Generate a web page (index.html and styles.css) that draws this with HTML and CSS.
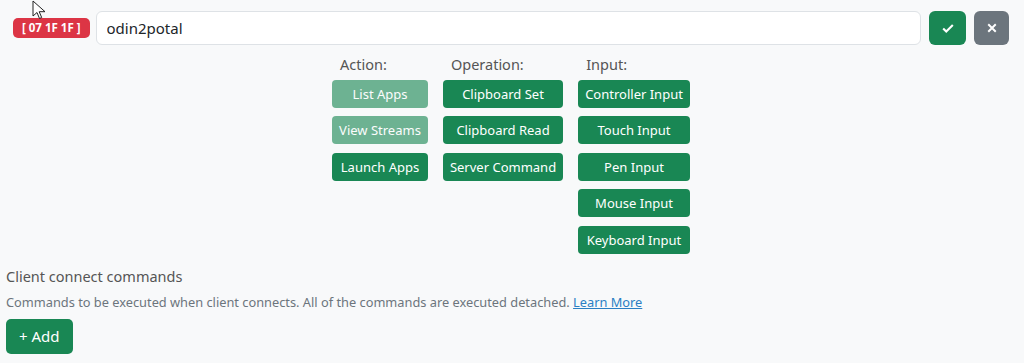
FILE: index.html
```html
<!DOCTYPE html>
<html lang="en">
<head>
  <meta charset="UTF-8" />
  <title>Client commands</title>
  <link rel="stylesheet" href="styles.css">
</head>
<body>
  <div class="page">
    <div class="cmd-row">
      <span class="badge">[ 07 1F 1F ]</span>
      <input class="cmd-input" type="text" value="odin2potal">
      <button class="icon-btn ok">
        <svg width="14" height="14" viewBox="0 0 16 16"><path d="M2.5 8.5l3.5 3.5 7.5-7.5" fill="none" stroke="#fff" stroke-width="2.4"/></svg>
      </button>
      <button class="icon-btn cancel">
        <svg width="12" height="12" viewBox="0 0 16 16"><path d="M3 3l10 10M13 3L3 13" fill="none" stroke="#fff" stroke-width="2.6"/></svg>
      </button>
    </div>

    <div class="perms">
      <div class="perm-col">
        <div class="perm-title">Action:</div>
        <button class="perm faded">List Apps</button>
        <button class="perm faded">View Streams</button>
        <button class="perm">Launch Apps</button>
      </div>
      <div class="perm-col">
        <div class="perm-title">Operation:</div>
        <button class="perm">Clipboard Set</button>
        <button class="perm">Clipboard Read</button>
        <button class="perm">Server Command</button>
      </div>
      <div class="perm-col">
        <div class="perm-title">Input:</div>
        <button class="perm">Controller Input</button>
        <button class="perm">Touch Input</button>
        <button class="perm">Pen Input</button>
        <button class="perm">Mouse Input</button>
        <button class="perm">Keyboard Input</button>
      </div>
    </div>

    <div class="section">
      <div class="section-title">Client connect commands</div>
      <div class="section-text">Commands to be executed when client connects. All of the commands are executed detached. <a href="#">Learn More</a></div>
      <button class="add-btn">+ Add</button>
    </div>
  </div>

  <svg class="cursor" width="14" height="20" viewBox="0 0 14 20">
    <path d="M1 1v15l4-3.5 2.5 6 2.2-1-2.5-5.8H13z" fill="#fff" stroke="#222" stroke-width="1"/>
  </svg>
</body>
</html>
```

FILE: styles.css
```css
body {
  margin: 0;
  background: #f8f9fa;
  font-family: "Noto Sans", "Open Sans", sans-serif;
  color: #212529;
}

.page {
  padding: 11px 15px 0 6px;
}

.cmd-row {
  display: flex;
  align-items: center;
  gap: 8px;
  padding-left: 7px;
}

.badge {
  background: #dc3545;
  color: #fff;
  font-size: 11.5px;
  font-weight: bold;
  padding: 2px 9px;
  border-radius: 5px;
  line-height: 16px;
  margin-right: -2px;
}

.cmd-input {
  flex: 1;
  height: 34px;
  box-sizing: border-box;
  border: 1px solid #dee2e6;
  border-radius: 6px;
  background: #fff;
  padding: 0 10px;
  font-family: inherit;
  font-size: 15px;
  color: #212529;
}

.icon-btn {
  width: 37px;
  height: 34px;
  border: none;
  border-radius: 6px;
  display: flex;
  align-items: center;
  justify-content: center;
}

.ok {
  background: #198754;
}

.cancel {
  background: #6c757d;
  width: 35px;
}

.perms {
  display: flex;
  justify-content: center;
  gap: 15px;
  margin-top: 7px;
  padding-left: 7px;
}

.perm-col {
  display: flex;
  flex-direction: column;
  gap: 8.5px;
}

.perm-title {
  font-size: 14.5px;
  line-height: 20px;
  padding: 2px 0 0 8px;
  margin-bottom: -3px;
  color: #555;
}

.perm {
  height: 28px;
  border: none;
  border-radius: 4px;
  background: #198754;
  color: #fff;
  font-family: inherit;
  font-size: 13px;
  padding: 0 7px;
}

.perm.faded {
  opacity: .62;
}

.section {
  margin-top: 12px;
}

.section-title {
  font-size: 14.5px;
  color: #555;
  line-height: 20px;
}

.section-text {
  font-size: 12.8px;
  color: #6c757d;
  margin-top: 7px;
  line-height: 18px;
}

.section-text a {
  color: #2b7fc4;
}

.add-btn {
  margin-top: 8px;
  height: 35px;
  padding: 0 13px;
  border: none;
  border-radius: 5px;
  background: #198754;
  color: #fff;
  font-family: inherit;
  font-size: 15px;
}

.cursor {
  position: absolute;
  left: 32px;
  top: 0;
}
```
